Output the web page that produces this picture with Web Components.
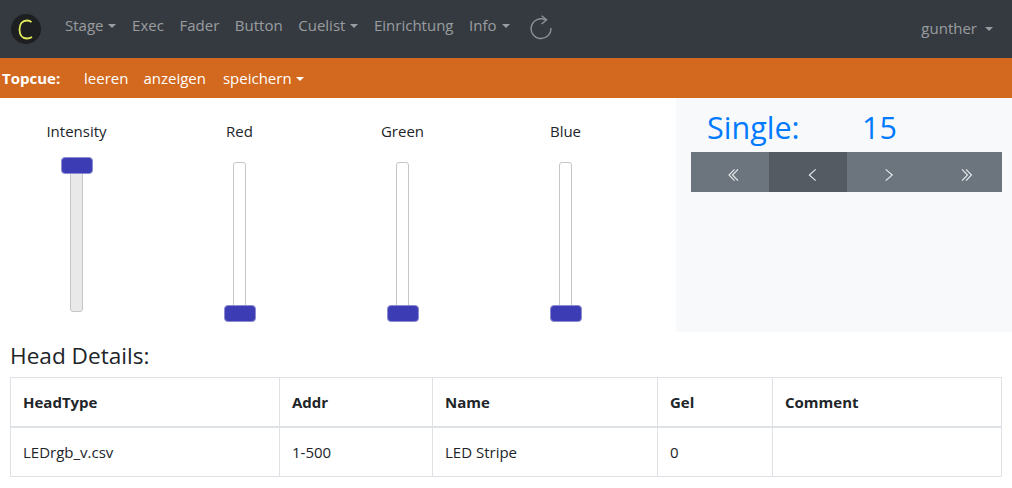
<!DOCTYPE html>
<html lang="de"><head><meta charset="utf-8"><title>Topcue</title>
<style>
html,body{margin:0;padding:0;background:#fff;color:#212529;font-family:"Open Sans","Noto Sans",sans-serif;font-size:16px}
body{width:1012px;height:488px;overflow:hidden}
</style></head><body>
<app-navbar>
  <nav-link caret>Stage</nav-link><nav-link>Exec</nav-link><nav-link>Fader</nav-link><nav-link>Button</nav-link><nav-link caret>Cuelist</nav-link><nav-link>Einrichtung</nav-link><nav-link caret>Info</nav-link>
</app-navbar>
<cue-bar></cue-bar>
<fader-area>
  <v-fader label="Intensity" value="100" lit></v-fader>
  <v-fader label="Red" value="0"></v-fader>
  <v-fader label="Green" value="0"></v-fader>
  <v-fader label="Blue" value="0"></v-fader>
</fader-area>
<head-details></head-details>
<script>
function def(name,html){
  customElements.define(name,class extends HTMLElement{
    connectedCallback(){ if(this.shadowRoot)return; const r=this.attachShadow({mode:'open'}); r.innerHTML=typeof html==='function'?html(this):html;}
  });
}
const caret=(c,m=5)=>`<span style="display:inline-block;margin-left:${m}px;vertical-align:3px;border-top:4.8px solid ${c};border-left:4.8px solid transparent;border-right:4.8px solid transparent"></span>`;
def('nav-link',el=>`<style>:host{display:block;padding:0 7.800px;color:rgba(255,255,255,.5);font-size:15px;line-height:24px;white-space:nowrap}</style><slot></slot>${el.hasAttribute('caret')?caret('rgba(255,255,255,.5)'):''}`);
def('app-navbar',`<style>
:host{display:flex;align-items:center;height:58px;background:#343a40;padding:0 19px 0 11px;box-sizing:border-box}
.logo{width:30px;height:30px;border-radius:50%;background:#1d1f20;display:flex;align-items:center;justify-content:center;margin-right:16.200px;flex:none}
.logo svg{display:block}
.links{display:flex;align-items:center;margin-top:-8px}
.re{margin-left:12px;display:block;margin-top:-4px}
.user{margin-left:auto;color:rgba(255,255,255,.5);font-size:15px;line-height:24px;white-space:nowrap;margin-top:-2px}
</style>
<div class="logo"><svg width="16" height="21" viewBox="0 0 16 21"><path d="M13.500 3.200C12.300 2 10.800 1.500 9 1.500 4.500 1.500 1.500 5 1.500 10.500s3 9 7.500 9c1.800 0 3.500-.5 5-1.500" fill="none" stroke="#e4ee5c" stroke-width="1.800"/></svg></div>
<div class="links"><slot></slot></div>
<svg class="re" width="24" height="25" viewBox="0 0 24 25" fill="none" stroke="#8f9397" stroke-width="1.400"><path d="M16.500 4.800A9.900 9.900 0 1 0 21.900 13"/><path d="M12.600 .7l5 4-5 4.300"/></svg>
<div class="user">gunther${caret('rgba(255,255,255,.5)',8)}</div>`);
def('cue-bar',`<style>
:host{display:flex;align-items:center;height:40px;background:#d2691e;color:#fff;font-size:15px;box-sizing:border-box;padding:0 0 0 2px;white-space:nowrap}
b{font-weight:700;width:82px}
span.l{margin-right:15px}
span.a{margin-right:17px}
</style><b>Topcue:</b><span class="l">leeren</span><span class="a">anzeigen</span><span class="l">speichern${caret('#fff',4)}</span>`);
def('v-fader',el=>{
  const v=+el.getAttribute('value'),lit=el.hasAttribute('lit');
  return `<style>
:host{display:flex;flex-direction:column;align-items:center;width:163px;font-size:15px;color:#212529}
.lab{line-height:20px;margin-top:23px;height:20px}
.rail{position:relative;width:13px;height:150px;margin-top:21px;box-sizing:border-box;border:1px solid #c6c6c6;border-radius:3px;background:${lit?'#e9e9e9':'#fff'}}
.thumb{position:absolute;left:-10px;width:32px;height:17px;box-sizing:border-box;background:#3c3cb4;border:1px solid #8d8dcf;border-radius:4px;${v>0?'top:-6px':'bottom:-11px'}}
</style><div class="lab">${el.getAttribute('label')}</div><div class="rail"><div class="thumb"></div></div>`});
def('step-btn',el=>`<style>:host{flex:1;display:flex;align-items:center;justify-content:center;padding-left:8px;background:${el.hasAttribute('active')?'#545b62':'#6c757d'}}svg{display:block;margin-top:6px}</style><svg width="12" height="14" viewBox="0 0 12 14" fill="none" stroke="#e9ecef" stroke-width="1.100"><path d="${el.getAttribute('d')}"/></svg>`);
def('single-panel',`<style>
:host{display:block;width:336px;height:234px;background:#f8f9fa;box-sizing:border-box;padding:9px 10px 0 15px;flex:none}
.t{display:flex;color:#007bff;font-size:30.500px;line-height:40px;height:45px;padding-left:16px}
.t span:first-child{width:155px}
.g{display:flex;height:40px}
</style><div class="t"><span>Single:</span><span>15</span></div>
<div class="g"><step-btn d="M6.500 1.300L1 7l5.500 5.700M10 1.300L4.500 7l5.500 5.700"></step-btn><step-btn active d="M9.700 1.300L3.300 7l6.400 5.700"></step-btn><step-btn d="M2.700 1.300L9.300 7l-6.600 5.700"></step-btn><step-btn d="M1 1.300L6.500 7 1 12.700M5 1.300L10.500 7 5 12.700"></step-btn></div>`);
def('fader-area',`<style>
:host{display:flex;height:234px}
.f{display:flex;width:681px;flex:none;margin-left:-5px}
</style><div class="f"><slot></slot></div><single-panel></single-panel>`);
def('head-details',`<style>
:host{display:block;padding:0 10px;color:#212529}
h4{margin:0;font-weight:400;font-size:22.600px;line-height:26px;padding-top:11px;height:21px;padding-bottom:13px;box-sizing:content-box}
table{border-collapse:collapse;width:991px;table-layout:fixed;font-size:15px}
th,td{border:1px solid #dee2e6;padding:0 12px;text-align:left;vertical-align:middle}
th{height:48px;border-bottom-width:2px;font-weight:700}
td{height:48px}
</style><h4>Head Details:</h4>
<table><colgroup><col style="width:269px"><col style="width:153px"><col style="width:225px"><col style="width:115px"><col style="width:229px"></colgroup>
<thead><tr><th>HeadType</th><th>Addr</th><th>Name</th><th>Gel</th><th>Comment</th></tr></thead>
<tbody><tr><td>LEDrgb_v.csv</td><td>1-500</td><td>LED Stripe</td><td>0</td><td></td></tr></tbody></table>`);
</script>
</body></html>
